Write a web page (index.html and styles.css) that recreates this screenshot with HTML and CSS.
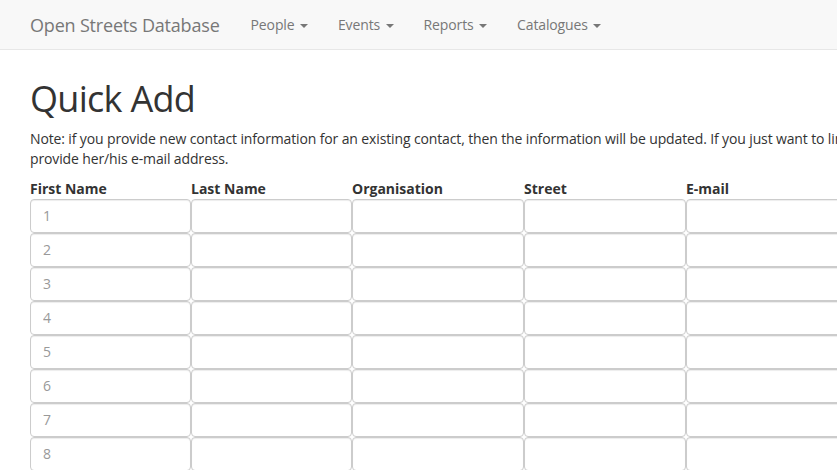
FILE: index.html
```
<!DOCTYPE html>
<html lang="en">
<head>
<meta charset="utf-8">
<title>Quick Add - Open Streets Database</title>
<link rel="stylesheet" href="styles.css">
</head>
<body>
<nav class="navbar">
  <a class="brand" href="#">Open Streets Database</a>
  <ul class="nav">
    <li><a href="#">People <span class="caret"></span></a></li>
    <li><a href="#">Events <span class="caret"></span></a></li>
    <li><a href="#">Reports <span class="caret"></span></a></li>
    <li><a href="#">Catalogues <span class="caret"></span></a></li>
  </ul>
</nav>
<main class="page">
  <h1 class="title">Quick Add</h1>
  <p class="note">Note: if you provide new contact information for an existing contact, then the information will be updated. If you just want to link an existing contact to an event, provide her/his e-mail address.</p>
  <table class="quick">
    <colgroup>
      <col class="c-first"><col class="c-last"><col class="c-org"><col class="c-street"><col class="c-mail"><col class="c-phone">
    </colgroup>
    <thead>
      <tr><th>First Name</th><th>Last Name</th><th>Organisation</th><th>Street</th><th>E-mail</th><th>Phone</th></tr>
    </thead>
    <tbody>
      <tr><td><input class="field" placeholder="1"></td><td><input class="field"></td><td><input class="field"></td><td><input class="field"></td><td><input class="field"></td><td><input class="field"></td></tr>
      <tr><td><input class="field" placeholder="2"></td><td><input class="field"></td><td><input class="field"></td><td><input class="field"></td><td><input class="field"></td><td><input class="field"></td></tr>
      <tr><td><input class="field" placeholder="3"></td><td><input class="field"></td><td><input class="field"></td><td><input class="field"></td><td><input class="field"></td><td><input class="field"></td></tr>
      <tr><td><input class="field" placeholder="4"></td><td><input class="field"></td><td><input class="field"></td><td><input class="field"></td><td><input class="field"></td><td><input class="field"></td></tr>
      <tr><td><input class="field" placeholder="5"></td><td><input class="field"></td><td><input class="field"></td><td><input class="field"></td><td><input class="field"></td><td><input class="field"></td></tr>
      <tr><td><input class="field" placeholder="6"></td><td><input class="field"></td><td><input class="field"></td><td><input class="field"></td><td><input class="field"></td><td><input class="field"></td></tr>
      <tr><td><input class="field" placeholder="7"></td><td><input class="field"></td><td><input class="field"></td><td><input class="field"></td><td><input class="field"></td><td><input class="field"></td></tr>
      <tr><td><input class="field" placeholder="8"></td><td><input class="field"></td><td><input class="field"></td><td><input class="field"></td><td><input class="field"></td><td><input class="field"></td></tr>
    </tbody>
  </table>
</main>
</body>
</html>
```
FILE: styles.css
```
html {
  overflow: hidden;
}
body {
  margin: 0;
  font-family: "Open Sans", "Noto Sans", sans-serif;
  font-size: 14px;
  line-height: 20px;
  letter-spacing: -0.13px;
  color: #333;
  background: #fff;
}
.navbar {
  display: flex;
  align-items: flex-start;
  height: 49px;
  padding: 0 15px;
  background: #f8f8f8;
  border-bottom: 1px solid #e7e7e7;
}
.brand {
  display: block;
  padding: 15px 16px 15px 15px;
  font-size: 18px;
  line-height: 20px;
  letter-spacing: -0.19px;
  color: #777;
  text-decoration: none;
}
.nav {
  display: flex;
  margin: 0;
  padding: 0;
  list-style: none;
}
.nav a {
  display: block;
  padding: 15px;
  line-height: 20px;
  color: #777;
  text-decoration: none;
}
.caret {
  display: inline-block;
  width: 0;
  height: 0;
  margin-left: 2px;
  vertical-align: middle;
  border-top: 4px solid #777;
  border-left: 4px solid transparent;
  border-right: 4px solid transparent;
}
.page {
  padding: 0 30px;
}
.title {
  margin: 29px 0 10px;
  font-size: 36px;
  font-weight: 500;
  line-height: 1.1;
  letter-spacing: -0.7px;
  color: #333;
}
.note {
  margin: 0 0 10px;
  width: 1060px;
}
.quick {
  border-collapse: collapse;
  border-spacing: 0;
  table-layout: fixed;
  width: 1018px;
}
.c-first { width: 161px; }
.c-last { width: 161px; }
.c-org { width: 172px; }
.c-street { width: 162px; }
.c-mail { width: 200px; }
.c-phone { width: 162px; }
.quick th {
  padding: 0;
  text-align: left;
  font-weight: bold;
  line-height: 20px;
  letter-spacing: 0;
}
.quick td {
  padding: 0;
}
.field {
  display: block;
  box-sizing: border-box;
  width: 100%;
  height: 34px;
  margin: 0;
  padding: 6px 12px;
  font-family: inherit;
  font-size: 14px;
  line-height: 20px;
  color: #555;
  background: #fff;
  border: 1px solid #ccc;
  border-radius: 4px;
  box-shadow: inset 0 1px 1px rgba(0, 0, 0, 0.075);
}
.field::placeholder {
  color: #999;
}
```
